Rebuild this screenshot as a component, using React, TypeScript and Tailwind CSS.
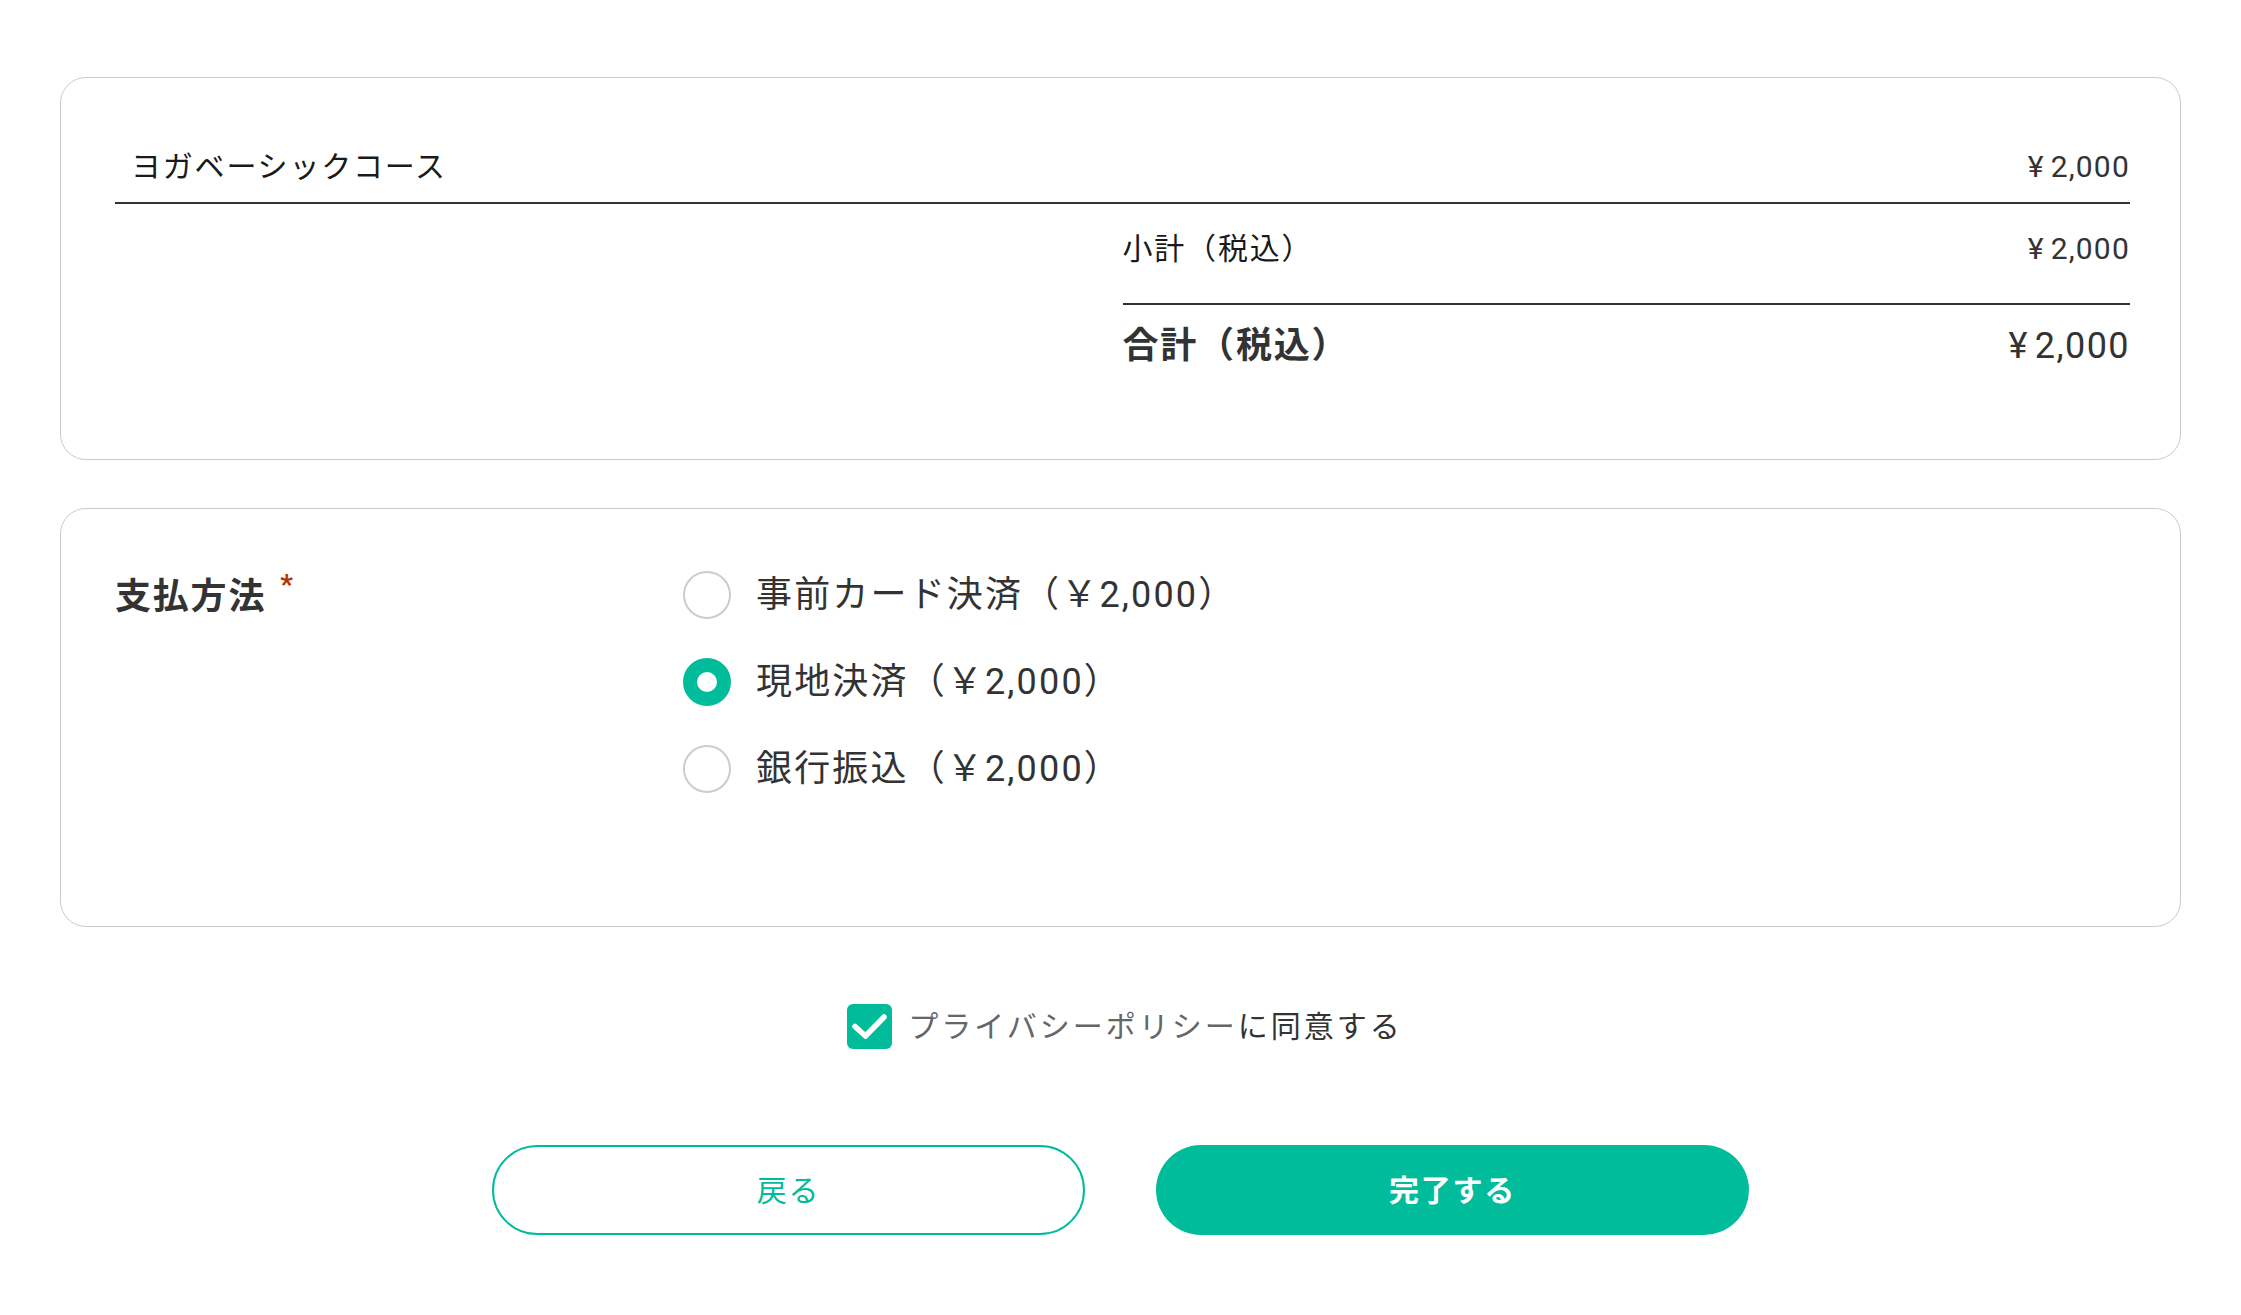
import React from "react";

function Price({ big }: { big?: boolean }) {
  return (
    <span
      className={
        big
          ? "text-[36px] leading-[54px] tracking-[0.04em] text-[#333]"
          : "text-[30px] leading-[45px] tracking-[0.04em] text-[#333]"
      }
    >
      <span className="mr-[6px]">¥</span>2,000
    </span>
  );
}

function Radio({ checked, label }: { checked?: boolean; label: string }) {
  return (
    <div className="flex h-[48px] items-center gap-[25px]">
      <span
        className={
          checked
            ? "box-border h-[48px] w-[48px] shrink-0 rounded-full border-[14px] border-[#00bc9b] bg-white"
            : "box-border h-[48px] w-[48px] shrink-0 rounded-full border-2 border-[#cccccc] bg-white"
        }
      />
      <span className="text-[36px] leading-[48px] tracking-[0.06em] text-[#333]">{label}</span>
    </div>
  );
}

export default function App() {
  return (
    <div className="min-h-screen bg-white px-[60px] pt-[77px] pb-[81px] [font-family:Roboto,'Noto_Sans_CJK_JP',sans-serif] text-[#333]">
      {/* Order summary card */}
      <div className="rounded-[26px] border border-[#cccccc] pt-[52px] pb-[86px] pl-[54px] pr-[50px]">
        <div className="box-border flex h-[74px] items-center justify-between border-b-2 border-[#333]">
          <span className="pl-[16px] text-[30px] leading-[45px] tracking-[0.06em] text-[#1a1a1a]">ヨガベーシックコース</span>
          <Price />
        </div>
        <div className="ml-auto w-1/2">
          <div className="flex items-center justify-between border-b-2 border-[#333] pt-[22px] pb-[32px]">
            <span className="text-[30px] leading-[45px] tracking-[0.06em] text-[#1a1a1a]">小計（税込）</span>
            <Price />
          </div>
          <div className="flex items-center justify-between pt-[14px]">
            <span className="text-[36px] font-bold leading-[54px] tracking-[0.05em] text-[#333]">合計（税込）</span>
            <Price big />
          </div>
        </div>
      </div>

      {/* Payment method card */}
      <div className="mt-[48px] flex rounded-[26px] border border-[#cccccc] pt-[62px] pb-[133px] pl-[54px] pr-[50px]">
        <div className="flex w-[568px] items-start pt-[2px]">
          <span className="text-[36px] font-bold leading-[48px] tracking-[0.05em] text-[#333]">支払方法</span>
          <span className="ml-[14px] -mt-[2px] text-[28px] font-bold leading-[28px] text-[#b83200]">*</span>
        </div>
        <div className="flex flex-col gap-[39px]">
          <Radio label="事前カード決済（￥2,000）" />
          <Radio checked label="現地決済（￥2,000）" />
          <Radio label="銀行振込（￥2,000）" />
        </div>
      </div>

      {/* Privacy agreement */}
      <div className="mt-[77px] flex items-center justify-center gap-[16px] pl-[9px]">
        <span className="flex h-[45px] w-[45px] items-center justify-center rounded-[6px] bg-[#00bc9b]">
          <svg width="45" height="45" viewBox="0 0 45 45" fill="none">
            <path
              d="M8 22.5 L18.5 32 L37 13"
              stroke="#ffffff"
              strokeWidth="5.5"
              strokeLinecap="round"
              strokeLinejoin="round"
            />
          </svg>
        </span>
        <span className="text-[30px] leading-[45px] tracking-[0.1em]">
          <span className="text-[#666666]">プライバシーポリシー</span>
          <span className="text-[#333]">に同意する</span>
        </span>
      </div>

      {/* Buttons */}
      <div className="mt-[96px] flex justify-center gap-[71px]">
        <button className="box-border flex h-[90px] w-[593px] items-center justify-center rounded-full border-[2.5px] border-[#00bc9b] bg-white text-[30px] tracking-[0.06em] text-[#00bc9b]">
          戻る
        </button>
        <button className="box-border flex h-[90px] w-[593px] items-center justify-center rounded-full bg-[#00bc9b] text-[30px] font-bold tracking-[0.06em] text-white">
          完了する
        </button>
      </div>
    </div>
  );
}
